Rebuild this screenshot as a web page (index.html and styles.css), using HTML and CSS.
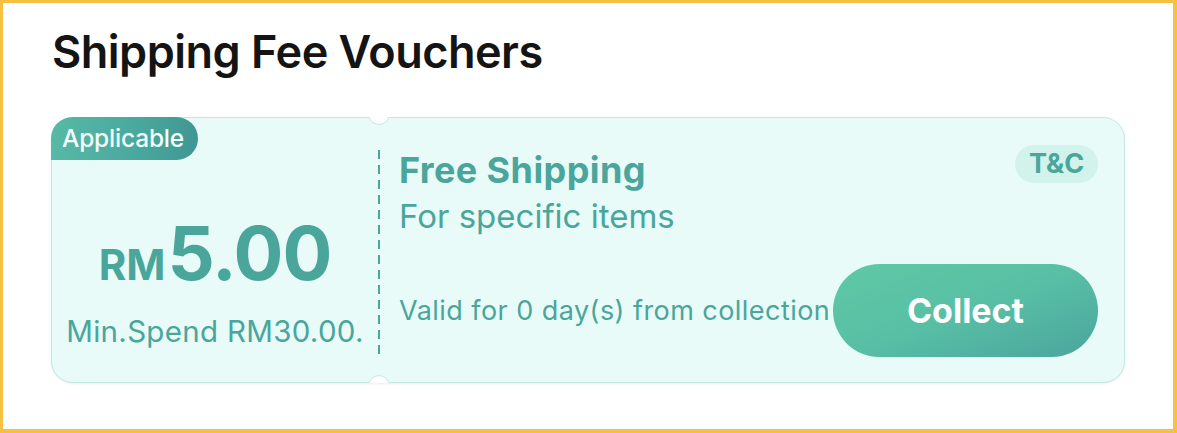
FILE: index.html
```html
<!DOCTYPE html>
<html>
<head>
<meta charset="utf-8">
<link rel="stylesheet" href="styles.css">
</head>
<body>
<div class="frame">
  <h1 class="title">Shipping Fee Vouchers</h1>
  <div class="voucher">
    <div class="left">
      <span class="badge">Applicable</span>
      <div class="amount"><span class="cur">RM</span><span class="val">5.00</span></div>
      <div class="min">Min.Spend RM30.00.</div>
    </div>
    <div class="divider"></div>
    <div class="right">
      <div class="top">
        <div class="info">
          <div class="name">Free Shipping</div>
          <div class="desc">For specific items</div>
        </div>
        <span class="tc">T&amp;C</span>
      </div>
      <div class="bottom">
        <span class="valid">Valid for 0 day(s) from collection</span>
        <button class="collect">Collect</button>
      </div>
    </div>
  </div>
</div>
</body>
</html>
```

FILE: styles.css
```css
html, body {
  margin: 0;
  padding: 0;
  background: #ffffff;
}
.frame {
  box-sizing: border-box;
  width: 1177px;
  height: 433px;
  border-style: solid;
  border-color: #f6c043;
  border-width: 3px 4px 4px 3px;
  padding: 22px 48px 0 48px;
  font-family: Inter, "Noto Sans", sans-serif;
  background: #ffffff;
}
.title {
  margin: 0 0 0 1px;
  font-size: 45px;
  line-height: 53px;
  font-weight: 600;
  color: #141414;
  letter-spacing: -0.5px;
}
.voucher {
  position: relative;
  margin-top: 39px;
  height: 266px;
  box-sizing: border-box;
  display: flex;
  background: #e8fbf8;
  border: 1px solid #c3e8e1;
  border-radius: 22px;
  box-shadow: 0 1px 2px rgba(90, 170, 160, 0.15);
}
.voucher::before,
.voucher::after {
  content: "";
  position: absolute;
  left: 316px;
  width: 22px;
  height: 22px;
  box-sizing: border-box;
  border-radius: 50%;
  background: #ffffff;
  border: 1px solid #c3e8e1;
}
.voucher::before {
  top: -15px;
  clip-path: inset(14px 0 0 0);
}
.voucher::after {
  bottom: -15px;
  clip-path: inset(0 0 14px 0);
}
.left {
  position: relative;
  width: 326px;
  display: flex;
  flex-direction: column;
  align-items: center;
  padding-top: 98px;
  box-sizing: border-box;
  color: #4aa69b;
}
.badge {
  position: absolute;
  left: -1px;
  top: -1px;
  width: 147px;
  height: 43px;
  box-sizing: border-box;
  border-radius: 22px 22px 22px 0;
  background: linear-gradient(90deg, #57b9a6 0%, #4aa79d 60%, #3f9794 100%);
  color: #f2fffc;
  font-size: 24.5px;
  font-weight: 500;
  line-height: 43px;
  padding-left: 11px;
  letter-spacing: -0.2px;
}
.amount {
  display: flex;
  align-items: baseline;
  line-height: 74px;
  font-weight: 700;
}
.cur {
  font-size: 42px;
  margin-right: 2px;
}
.val {
  font-size: 74px;
  letter-spacing: -1px;
}
.min {
  margin-top: 13px;
  font-size: 29.5px;
  line-height: 32px;
  letter-spacing: 0.3px;
}
.divider {
  width: 2px;
  margin: 32px 0 26px 0;
  background: repeating-linear-gradient(180deg, #4aa69b 0 9px, transparent 9px 15px);
}
.right {
  flex: 1;
  display: flex;
  flex-direction: column;
  justify-content: space-between;
  padding: 27px 26px 25px 19px;
  color: #4aa69b;
}
.top {
  display: flex;
  justify-content: space-between;
  align-items: flex-start;
}
.info {
  margin-top: 4px;
}
.name {
  font-size: 36px;
  line-height: 42px;
  font-weight: 700;
  letter-spacing: 0.4px;
}
.desc {
  margin-top: 5px;
  font-size: 33px;
  line-height: 40px;
  font-weight: 400;
}
.tc {
  display: block;
  width: 83px;
  height: 38px;
  box-sizing: border-box;
  border-radius: 19px;
  background: #d2f2ec;
  font-size: 27px;
  font-weight: 700;
  line-height: 38px;
  text-align: center;
}
.bottom {
  display: flex;
  justify-content: space-between;
  align-items: center;
}
.valid {
  font-size: 27px;
  letter-spacing: 0.45px;
}
.collect {
  width: 265px;
  height: 93px;
  border: none;
  border-radius: 47px;
  background: linear-gradient(160deg, #5fc9a4 0%, #58bfa5 50%, #4aa59d 100%);
  color: #ffffff;
  font-family: Inter, "Noto Sans", sans-serif;
  font-size: 34px;
  font-weight: 700;
  padding: 0;
}
```
